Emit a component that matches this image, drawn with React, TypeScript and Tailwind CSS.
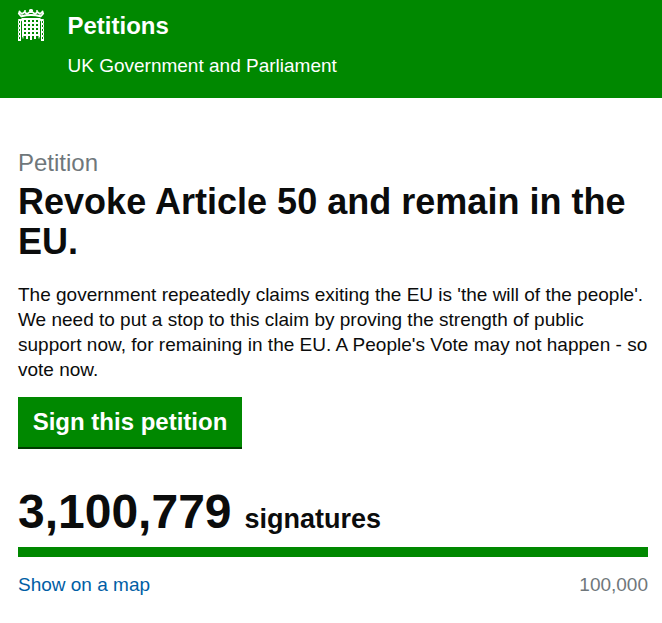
function Portcullis() {
  const rows = [20, 24, 28, 32];
  const links = [21, 25, 29, 33, 37];
  return (
    <svg width="28" height="34" viewBox="17 8 28 34" className="block" fill="none" aria-hidden="true">
      <g stroke="#fff" strokeWidth="1.5">
        <path d="M21.800 17L18.800 13.500 19.500 11.800 22 14 24.500 12 27 14 30 11.800h2L35 14 37.500 12 40 14 42.500 11.800 43.200 13.500 40.200 17" strokeWidth="1.700" />
        <path d="M21.500 16.300Q31 13.800 40.500 16.300" strokeWidth="2" />
        <path d="M31 9v4M29 10.500h4" strokeWidth="1.800" />
        <path d="M25 10v2.500M37 10v2.500M19.500 10.800v1.700M42.500 10.800v1.700" />
      </g>
      <path fill="#fff" d="M21 19l1-1h18l1 1v1.500l-1 1V37h-.5v1.500h-1V36h-2.500v3h-2v-3h-2v4h-2v-4h-2v3h-2v-3h-2.500v2.500h-1V37H22V21.500l-1-1z" />
      {rows.map((y) => (
        <path key={y} fill="#008800" d={`M24 ${y}h2v2h-2zM28 ${y}h2v2h-2zM32 ${y}h2v2h-2zM36 ${y}h2v2h-2z`} />
      ))}
      <path fill="#fff" d="M18 19h3v22h-3zM41 19h3v22h-3z" />
      {links.map((y) => (
        <path key={y} fill="#008800" d={`M19 ${y}h1v2h-1zM42 ${y}h1v2h-1zM18 ${y - 1.5}h.5v1h-.5zM43.500 ${y - 1.5}h.5v1h-.5z`} />
      ))}
    </svg>
  );
}

export default function App() {
  return (
    <div className="min-h-[623px] w-full bg-white font-['Liberation_Sans',Arial,sans-serif] text-[#0b0c0c]">
      <header className="flex h-[98px] bg-[#008800] pl-[17px] pt-2 text-white">
        <Portcullis />
        <div className="pl-[22.500px]">
          <p className="pt-[3px] text-[24px] leading-[30px] font-bold">Petitions</p>
          <p className="pt-[5px] text-[19px] leading-[40px]">UK Government and Parliament</p>
        </div>
      </header>
      <main className="px-[18px] pt-[50px]">
        <h1>
          <span className="block text-[24px] leading-[30px] text-[#6f777b]">Petition</span>
          <span className="mt-[4px] block w-[630px] text-[36px] leading-[40px] font-bold tracking-[0.02px]">
            Revoke Article 50 and remain in the<br />EU.
          </span>
        </h1>
        <p className="mt-[20px] w-[640px] text-[19px] leading-[25px]">
          The government repeatedly claims exiting the EU is 'the will of the people'.<br />
          We need to put a stop to this claim by proving the strength of public<br />
          <span className="tracking-[0.02px]">support now, for remaining in the EU. A People's Vote may not happen - so</span><br />
          vote now.
        </p>
        <button className="mt-[15px] block h-[52px] w-[224px] border-b-2 border-[#003c00] bg-[#008800] text-[24px] leading-[50px] font-bold whitespace-nowrap text-white">
          Sign this petition
        </button>
        <p className="mt-[37px] flex h-[52px] items-baseline gap-[13px] leading-[52px] font-bold">
          <span className="text-[48px]">3,100,779</span>
          <span className="text-[27px]">signatures</span>
        </p>
        <div className="mt-[9px] h-[10px] w-[630px] bg-[#008800]" />
        <div className="mt-[15px] flex w-[630px] justify-between text-[19px] leading-[25px]">
          <a className="text-[#005ea5]">Show on a map</a>
          <span className="text-[#6f777b]">100,000</span>
        </div>
      </main>
    </div>
  );
}
